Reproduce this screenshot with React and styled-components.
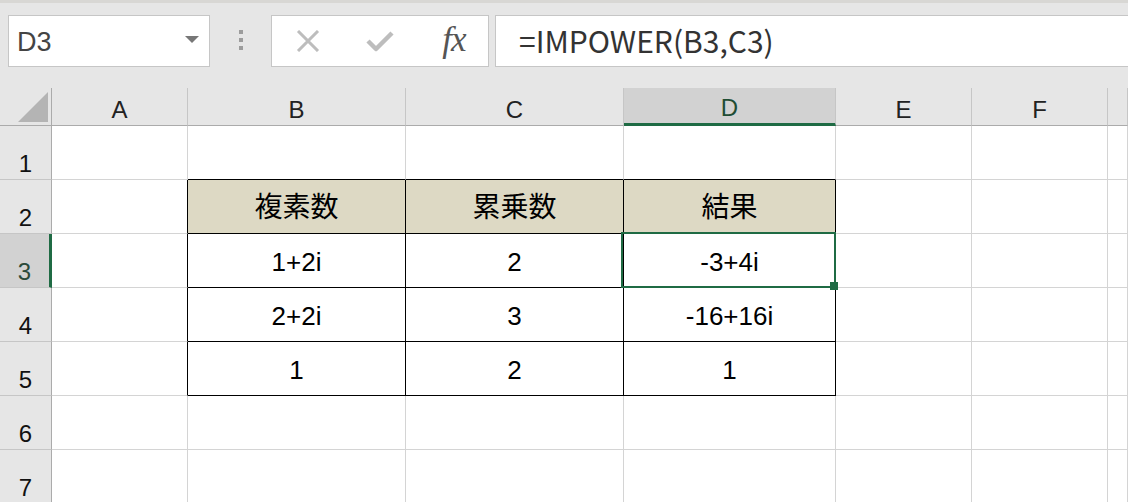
import React from 'react'
import styled, { createGlobalStyle } from 'styled-components'

const GREEN = '#1f6b44'
const GRID = '#d4d4d4'
const HEAD_LINE = '#c6c6c6'
const HEAD_EDGE = '#ababab'
const TAN = '#ddd9c4'

const columns = ['A', 'B', 'C', 'D', 'E', 'F', '']

const rows = [
  ['', '', '', '', '', '', ''],
  ['', '複素数', '累乗数', '結果', '', '', ''],
  ['', '1+2i', '2', '-3+4i', '', '', ''],
  ['', '2+2i', '3', '-16+16i', '', '', ''],
  ['', '1', '2', '1', '', '', ''],
  ['', '', '', '', '', '', ''],
  ['', '', '', '', '', '', ''],
]

// active cell D3
const activeRow = 3
const activeCol = 3

const GlobalStyle = createGlobalStyle`
  html, body {
    margin: 0;
    padding: 0;
    overflow: hidden;
    background: #e6e6e6;
  }
  body {
    font-family: "Liberation Sans", "Noto Sans CJK JP", sans-serif;
  }
`

const Page = styled.div`
  width: 1128px;
  height: 502px;
  overflow: hidden;
  background: #e6e6e6;
`

const TopEdge = styled.div`
  height: 3px;
  background: #d8d7d4;
`

const FormulaBar = styled.div`
  display: flex;
  height: 52px;
  padding: 12px 0 21px 8px;
`

const NameBox = styled.div`
  box-sizing: border-box;
  width: 202px;
  display: flex;
  align-items: center;
  justify-content: space-between;
  padding: 3px 10px 0 8px;
  background: #fff;
  border: 1px solid ${HEAD_LINE};
  font-size: 27px;
  color: #444;
`

const Caret = styled.span`
  width: 0;
  height: 0;
  margin-bottom: 6px;
  border-left: 7px solid transparent;
  border-right: 7px solid transparent;
  border-top: 7px solid #777;
`

const Grip = styled.div`
  width: 61px;
  display: flex;
  flex-direction: column;
  align-items: center;
  justify-content: center;
  gap: 4px;
  padding-bottom: 3px;
`

const GripDot = styled.span`
  width: 4px;
  height: 4px;
  background: #9c9c9c;
`

const ButtonBox = styled.div`
  box-sizing: border-box;
  width: 218px;
  display: flex;
  background: #fff;
  border: 1px solid ${HEAD_LINE};
`

const BarButton = styled.div`
  width: 72px;
  display: flex;
  align-items: center;
  justify-content: center;
`

const Fx = styled.span`
  font-family: "Liberation Serif", serif;
  font-style: italic;
  font-size: 35px;
  line-height: 1;
  color: #555;
  margin: 0 0 4px 4px;
  letter-spacing: -1px;
`

const FormulaInput = styled.div`
  flex: 1;
  margin-left: 6px;
  display: flex;
  align-items: center;
  padding: 0 0 2px 23px;
  background: #fff;
  border: 1px solid ${HEAD_LINE};
  border-right: none;
  font-family: "Noto Sans CJK JP", sans-serif;
  font-size: 30px;
  line-height: 1;
  color: #333;
`

const Sheet = styled.div`
  display: grid;
  grid-template-columns: 52px 136px 218px 218px 212px 136px 136px 1fr;
  grid-template-rows: 38px;
  grid-auto-rows: 54px;
  background: #fff;
`

const Corner = styled.div`
  box-sizing: border-box;
  display: flex;
  align-items: flex-end;
  justify-content: flex-end;
  padding: 0 3px 3px 0;
  background: #e6e6e6;
  border-right: 1px solid ${HEAD_EDGE};
  border-bottom: 1px solid ${HEAD_EDGE};
`

const ColHead = styled.div`
  box-sizing: border-box;
  display: flex;
  align-items: flex-end;
  justify-content: center;
  padding-bottom: 3px;
  font-size: 24px;
  line-height: 1;
  background: ${p => (p.$active ? '#d2d2d2' : '#e6e6e6')};
  color: ${p => (p.$active ? '#1f4d34' : '#222')};
  border-right: 1px solid ${HEAD_LINE};
  border-bottom: ${p => (p.$active ? `3px solid ${GREEN}` : `1px solid ${HEAD_EDGE}`)};
`

const RowHead = styled.div`
  box-sizing: border-box;
  display: flex;
  align-items: flex-end;
  justify-content: center;
  padding-bottom: 3px;
  font-size: 24px;
  line-height: 1;
  background: ${p => (p.$active ? '#d2d2d2' : '#e6e6e6')};
  color: ${p => (p.$active ? '#2a4a3a' : '#111')};
  border-right: ${p => (p.$active ? `3px solid ${GREEN}` : `1px solid ${HEAD_EDGE}`)};
  border-bottom: 1px solid ${HEAD_LINE};
`

const Cell = styled.div`
  box-sizing: border-box;
  position: relative;
  z-index: ${p => (p.$active ? 2 : 'auto')};
  display: flex;
  align-items: center;
  justify-content: center;
  padding-top: 2px;
  font-size: ${p => (p.$title ? '28px' : '26px')};
  line-height: 1;
  color: #000;
  background: ${p => (p.$title ? TAN : '#fff')};
  border-right: 1px solid ${p => (p.$edgeR ? '#000' : GRID)};
  border-bottom: 1px solid ${p => (p.$edgeB ? '#000' : GRID)};
`

const Selection = styled.div`
  position: absolute;
  top: -2px;
  left: -3px;
  right: -1px;
  bottom: -1px;
  border: 2px solid ${GREEN};
  pointer-events: none;
`

const FillHandle = styled.div`
  position: absolute;
  right: -3px;
  bottom: -3px;
  width: 8px;
  height: 8px;
  background: ${GREEN};
`

const CrossIcon = () => (
  <svg width="24" height="22" viewBox="0 0 24 22">
    <path d="M2 1 L22 21 M22 1 L2 21" stroke="#bdbdbd" strokeWidth="3" fill="none" />
  </svg>
)

const CheckIcon = () => (
  <svg width="28" height="22" viewBox="0 0 28 22">
    <path d="M2 11 L10 19 L26 3" stroke="#bdbdbd" strokeWidth="4.5" fill="none" strokeLinejoin="round" />
  </svg>
)

const CornerMark = () => (
  <svg width="30" height="30" viewBox="0 0 30 30">
    <polygon points="30,0 30,30 0,30" fill="#b4b4b4" />
  </svg>
)

export default function App() {
  return (
    <Page>
      <GlobalStyle />
      <TopEdge />
      <FormulaBar>
        <NameBox>
          <span>D3</span>
          <Caret />
        </NameBox>
        <Grip>
          <GripDot />
          <GripDot />
          <GripDot />
        </Grip>
        <ButtonBox>
          <BarButton><CrossIcon /></BarButton>
          <BarButton><CheckIcon /></BarButton>
          <BarButton><Fx>fx</Fx></BarButton>
        </ButtonBox>
        <FormulaInput>=IMPOWER(B3,C3)</FormulaInput>
      </FormulaBar>

      <Sheet>
        <Corner><CornerMark /></Corner>
        {columns.map((c, i) => (
          <ColHead key={i} $active={i === activeCol}>{c}</ColHead>
        ))}
        {rows.map((cells, r) => {
          const rowNo = r + 1
          return (
            <React.Fragment key={rowNo}>
              <RowHead $active={rowNo === activeRow}>{rowNo}</RowHead>
              {cells.map((v, c) => {
                const inTable = rowNo >= 2 && rowNo <= 5
                const edgeR = inTable && c <= 3
                const edgeB = rowNo <= 5 && c >= 1 && c <= 3
                const active = rowNo === activeRow && c === activeCol
                return (
                  <Cell
                    key={c}
                    $active={active}
                    $edgeR={edgeR}
                    $edgeB={edgeB}
                    $title={rowNo === 2 && c >= 1 && c <= 3}
                  >
                    {v}
                    {active && (
                      <>
                        <Selection />
                        <FillHandle />
                      </>
                    )}
                  </Cell>
                )
              })}
            </React.Fragment>
          )
        })}
      </Sheet>
    </Page>
  )
}
